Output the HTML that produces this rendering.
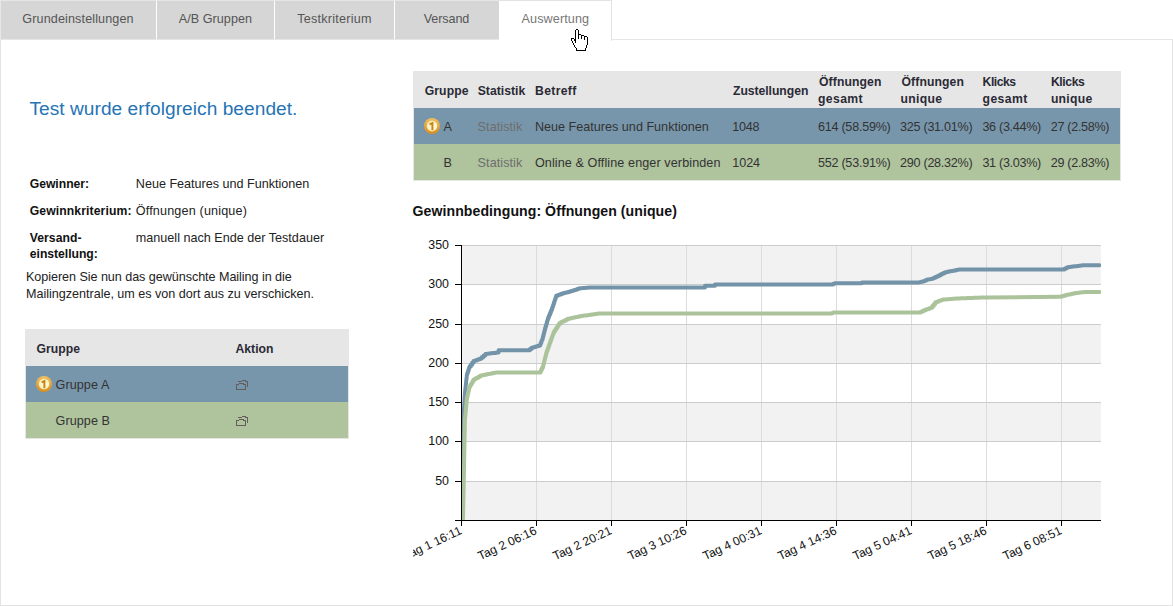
<!DOCTYPE html>
<html><head><meta charset="utf-8"><style>
html,body{margin:0;padding:0;background:#fff;width:1173px;height:606px;overflow:hidden;position:relative}
body{font-family:"Liberation Sans", sans-serif}
.t{position:absolute;white-space:nowrap;font-family:"Liberation Sans", sans-serif}
.tab{position:absolute;top:0;height:38px;background:#d6d6d6;border-top:1px solid #e6e6e6}
.atab{position:absolute;left:499px;top:0;width:112px;height:40px;background:#fff;border-top:1px solid #e3e3e3;border-right:1px solid #e3e3e3}
.box{position:absolute}
.chart{position:absolute;left:0;top:0}
.ic{position:absolute}
.panel{position:absolute;left:0;top:39px;width:1171px;height:566px;border:1px solid #e3e3e3;border-top:none}
.topline{position:absolute;left:0;top:39px;width:1173px;height:1px;background:#e6e6e6}
.leftline{position:absolute;left:0;top:0;width:1px;height:39px;background:#e6e6e6}
</style></head><body>
<div class="panel"></div>
<div class="topline"></div>
<div class="leftline"></div>
<div style="position:absolute;left:0;top:0;width:499px;height:1px;background:#e8e8e8"></div>
<div class="tab" style="left:1px;width:155px"></div>
<div class="tab" style="left:157px;width:117px"></div>
<div class="tab" style="left:275px;width:119px"></div>
<div class="tab" style="left:395px;width:104px"></div>
<div class="atab"></div>
<div class="box" style="left:25px;top:329px;width:322px;height:108px;border:1px solid #e6e6e6;background:#fff"></div>
<div class="box" style="left:26px;top:330px;width:322px;height:36px;background:#e6e6e6"></div>
<div class="box" style="left:26px;top:366px;width:322px;height:36px;background:#7896ab"></div>
<div class="box" style="left:26px;top:402px;width:322px;height:36px;background:#afc39d"></div>
<div class="box" style="left:413px;top:71px;width:706px;height:108px;border:1px solid #e6e6e6;background:#fff"></div>
<div class="box" style="left:414px;top:72px;width:706px;height:36px;background:#e6e6e6"></div>
<div class="box" style="left:414px;top:108px;width:706px;height:36px;background:#7896ab"></div>
<div class="box" style="left:414px;top:144px;width:706px;height:36px;background:#afc39d"></div>
<svg class="chart" width="1173" height="606" viewBox="0 0 1173 606" shape-rendering="crispEdges">
<defs><clipPath id="plot"><rect x="462" y="245" width="639" height="275"/></clipPath><clipPath id="lab"><rect x="413" y="0" width="760" height="606"/></clipPath></defs>
<rect x="462" y="245" width="639" height="39" fill="#f2f2f2"/>
<rect x="462" y="324" width="639" height="39" fill="#f2f2f2"/>
<rect x="462" y="402" width="639" height="39" fill="#f2f2f2"/>
<rect x="462" y="481" width="639" height="39" fill="#f2f2f2"/>
<rect x="536" y="245" width="1" height="275" fill="#dcdcdc"/>
<rect x="611" y="245" width="1" height="275" fill="#dcdcdc"/>
<rect x="686" y="245" width="1" height="275" fill="#dcdcdc"/>
<rect x="761" y="245" width="1" height="275" fill="#dcdcdc"/>
<rect x="836" y="245" width="1" height="275" fill="#dcdcdc"/>
<rect x="911" y="245" width="1" height="275" fill="#dcdcdc"/>
<rect x="986" y="245" width="1" height="275" fill="#dcdcdc"/>
<rect x="1061" y="245" width="1" height="275" fill="#dcdcdc"/>
<rect x="462" y="245" width="639" height="1" fill="#cccccc"/>
<rect x="455" y="245" width="6" height="1" fill="#000"/>
<rect x="462" y="284" width="639" height="1" fill="#cccccc"/>
<rect x="455" y="284" width="6" height="1" fill="#000"/>
<rect x="462" y="324" width="639" height="1" fill="#cccccc"/>
<rect x="455" y="324" width="6" height="1" fill="#000"/>
<rect x="462" y="363" width="639" height="1" fill="#cccccc"/>
<rect x="455" y="363" width="6" height="1" fill="#000"/>
<rect x="462" y="402" width="639" height="1" fill="#cccccc"/>
<rect x="455" y="402" width="6" height="1" fill="#000"/>
<rect x="462" y="441" width="639" height="1" fill="#cccccc"/>
<rect x="455" y="441" width="6" height="1" fill="#000"/>
<rect x="462" y="481" width="639" height="1" fill="#cccccc"/>
<rect x="455" y="481" width="6" height="1" fill="#000"/>
<rect x="455" y="520" width="6" height="1" fill="#000"/>
<polyline clip-path="url(#plot)" shape-rendering="geometricPrecision" points="462,519 462.02,519.0 462.02,517.39 462.04,517.39 462.04,515.78 462.06,515.78 462.06,514.16 462.07,514.16 462.07,512.55 462.09,512.55 462.09,510.94 462.11,510.94 462.11,509.33 462.13,509.33 462.13,507.71 462.15,507.71 462.15,506.1 462.17,506.1 462.17,504.49 462.18,504.49 462.18,502.88 462.2,502.88 462.2,501.27 462.22,501.27 462.22,499.65 462.24,499.65 462.24,498.04 462.26,498.04 462.26,496.43 462.28,496.43 462.28,494.82 462.29,494.82 462.29,493.2 462.31,493.2 462.31,491.59 462.33,491.59 462.33,489.98 462.35,489.98 462.35,488.37 462.37,488.37 462.37,486.76 462.39,486.76 462.39,485.14 462.4,485.14 462.4,483.53 462.42,483.53 462.42,481.92 462.44,481.92 462.44,480.31 462.46,480.31 462.46,478.69 462.48,478.69 462.48,477.08 462.5,477.08 462.5,475.47 462.51,475.47 462.51,473.86 462.53,473.86 462.53,472.24 462.55,472.24 462.55,470.63 462.57,470.63 462.57,469.02 462.59,469.02 462.59,467.41 462.61,467.41 462.61,465.8 462.62,465.8 462.62,464.18 462.64,464.18 462.64,462.57 462.66,462.57 462.66,460.96 462.68,460.96 462.68,459.35 462.7,459.35 462.7,457.73 462.72,457.73 462.72,456.12 462.73,456.12 462.73,454.51 462.75,454.51 462.75,452.9 462.77,452.9 462.77,451.29 462.79,451.29 462.79,449.67 462.81,449.67 462.81,448.06 462.83,448.06 462.83,446.45 462.84,446.45 462.84,444.84 462.86,444.84 462.86,443.22 462.88,443.22 462.88,441.61 462.9,441.61 462.9,440.0 462.95,440.0 462.95,438.38 462.99,438.38 462.99,436.77 463.04,436.77 463.04,435.15 463.08,435.15 463.08,433.54 463.13,433.54 463.13,431.92 463.18,431.92 463.18,430.31 463.22,430.31 463.22,428.69 463.27,428.69 463.27,427.08 463.32,427.08 463.32,425.46 463.36,425.46 463.36,423.85 463.41,423.85 463.41,422.23 463.45,422.23 463.45,420.62 463.5,420.62 463.5,419.0 463.59,419.0 463.59,417.36 463.68,417.36 463.68,415.73 463.76,415.73 463.76,414.09 463.85,414.09 463.85,412.45 463.94,412.45 463.94,410.81 464.02,410.81 464.02,409.18 464.11,409.18 464.11,407.54 464.2,407.54 464.2,405.9 464.29,405.9 464.29,404.26 464.38,404.26 464.38,402.62 464.46,402.62 464.46,400.99 464.55,400.99 464.55,399.35 464.64,399.35 464.64,397.71 464.72,397.71 464.72,396.07 464.81,396.07 464.81,394.44 464.9,394.44 464.9,392.8 465.07,392.8 465.07,391.26 465.23,391.26 465.23,389.72 465.4,389.72 465.4,388.18 465.57,388.18 465.57,386.63 465.73,386.63 465.73,385.09 465.9,385.09 465.9,383.55 466.07,383.55 466.07,382.01 466.23,382.01 466.23,380.47 466.4,380.47 466.4,378.93 466.57,378.93 466.57,377.38 466.73,377.38 466.73,375.84 466.9,375.84 466.9,374.3 467.42,374.3 467.42,372.72 467.94,372.72 467.94,371.14 468.46,371.14 468.46,369.56 468.98,369.56 468.98,367.98 469.5,367.98 469.5,366.4 470.83,366.4 470.83,364.63 472.17,364.63 472.17,362.87 473.5,362.87 473.5,361.1 475.15,361.1 475.15,360.45 476.8,360.45 476.8,359.8 478.45,359.8 478.45,359.15 480.1,359.15 480.1,358.5 481.87,358.5 481.87,356.97 483.63,356.97 483.63,355.43 485.4,355.43 485.4,353.9 487.1,353.9 487.1,353.7 488.8,353.7 488.8,353.5 490.5,353.5 490.5,353.3 492.2,353.3 492.2,353.1 493.9,353.1 493.9,352.9 495.6,352.9 495.6,352.7 497.3,352.7 497.3,352.5 498.6,352.5 498.6,350.2 528.2,350.3 529.85,350.3 529.85,349.0 531.5,349.0 531.5,347.7 533.14,347.7 533.14,347.2 534.78,347.2 534.78,346.7 536.42,346.7 536.42,346.2 538.06,346.2 538.06,345.7 539.7,345.7 539.7,345.2 540.33,345.2 540.33,343.75 540.95,343.75 540.95,342.3 541.58,342.3 541.58,340.85 542.2,340.85 542.2,339.4 542.62,339.4 542.62,337.75 543.03,337.75 543.03,336.1 543.45,336.1 543.45,334.45 543.87,334.45 543.87,332.8 544.28,332.8 544.28,331.15 544.7,331.15 544.7,329.5 545.17,329.5 545.17,327.86 545.64,327.86 545.64,326.21 546.11,326.21 546.11,324.57 546.59,324.57 546.59,322.93 547.06,322.93 547.06,321.29 547.53,321.29 547.53,319.64 548.0,319.64 548.0,318.0 548.68,318.0 548.68,316.33 549.37,316.33 549.37,314.67 550.05,314.67 550.05,313.0 550.73,313.0 550.73,311.33 551.42,311.33 551.42,309.67 552.1,309.67 552.1,308.0 552.61,308.0 552.61,306.46 553.12,306.46 553.12,304.93 553.64,304.93 553.64,303.39 554.15,303.39 554.15,301.85 554.66,301.85 554.66,300.31 555.18,300.31 555.18,298.77 555.69,298.77 555.69,297.24 556.2,297.24 556.2,295.7 557.85,295.7 557.85,295.07 559.5,295.07 559.5,294.45 561.15,294.45 561.15,293.82 562.8,293.82 562.8,293.2 564.45,293.2 564.45,292.8 566.1,292.8 566.1,292.4 567.75,292.4 567.75,292.0 569.4,292.0 569.4,291.6 571.05,291.6 571.05,291.05 572.7,291.05 572.7,290.5 574.35,290.5 574.35,289.95 576.0,289.95 576.0,289.4 577.65,289.4 577.65,288.85 579.3,288.85 579.3,288.3 580.83,288.3 580.83,288.19 582.36,288.19 582.36,288.07 583.89,288.07 583.89,287.96 585.41,287.96 585.41,287.84 586.94,287.84 586.94,287.73 588.47,287.73 588.47,287.61 590.0,287.61 590.0,287.5 703,287.5 705.0,287.5 705.0,285.8 713,285.8 715.0,285.8 715.0,284.4 831.8,284.4 833.2,284.4 833.2,283.8 834.6,283.8 834.6,283.2 860.5,283.2 861.9,283.2 861.9,282.4 919.1,282.4 921.5,281.8 922.95,281.8 922.95,281.23 924.4,281.23 924.4,280.65 925.85,280.65 925.85,280.07 927.3,280.07 927.3,279.5 928.93,279.5 928.93,279.2 930.57,279.2 930.57,278.9 932.2,278.9 932.2,278.6 933.81,278.6 933.81,277.8 935.43,277.8 935.43,277.0 937.04,277.0 937.04,276.2 938.65,276.2 938.65,275.4 940.26,275.4 940.26,274.6 941.88,274.6 941.88,273.8 943.49,273.8 943.49,273.0 945.1,273.0 945.1,272.2 946.64,272.2 946.64,271.9 948.19,271.9 948.19,271.6 949.73,271.6 949.73,271.3 951.28,271.3 951.28,271.0 952.82,271.0 952.82,270.7 954.37,270.7 954.37,270.4 955.91,270.4 955.91,270.1 957.46,270.1 957.46,269.8 959.0,269.8 959.0,269.5 1063,269.5 1064.43,269.5 1064.43,268.77 1065.87,268.77 1065.87,268.03 1067.3,268.03 1067.3,267.3 1068.97,267.3 1068.97,267.07 1070.63,267.07 1070.63,266.83 1072.3,266.83 1072.3,266.6 1073.97,266.6 1073.97,266.37 1075.63,266.37 1075.63,266.13 1077.3,266.13 1077.3,265.9 1078.97,265.9 1078.97,265.67 1080.63,265.67 1080.63,265.43 1082.3,265.43 1082.3,265.2 1099.4,265.2" fill="none" stroke="#7393a9" stroke-width="4" stroke-linejoin="round" stroke-linecap="round"/>
<polyline clip-path="url(#plot)" shape-rendering="geometricPrecision" points="463,519 463.03,519.0 463.03,517.39 463.06,517.39 463.06,515.78 463.09,515.78 463.09,514.18 463.12,514.18 463.12,512.57 463.15,512.57 463.15,510.96 463.18,510.96 463.18,509.35 463.21,509.35 463.21,507.74 463.25,507.74 463.25,506.14 463.28,506.14 463.28,504.53 463.31,504.53 463.31,502.92 463.34,502.92 463.34,501.31 463.37,501.31 463.37,499.7 463.4,499.7 463.4,498.1 463.43,498.1 463.43,496.49 463.46,496.49 463.46,494.88 463.49,494.88 463.49,493.27 463.52,493.27 463.52,491.66 463.55,491.66 463.55,490.05 463.58,490.05 463.58,488.45 463.61,488.45 463.61,486.84 463.64,486.84 463.64,485.23 463.67,485.23 463.67,483.62 463.7,483.62 463.7,482.01 463.74,482.01 463.74,480.41 463.77,480.41 463.77,478.8 463.8,478.8 463.8,477.19 463.83,477.19 463.83,475.58 463.86,475.58 463.86,473.97 463.89,473.97 463.89,472.37 463.92,472.37 463.92,470.76 463.95,470.76 463.95,469.15 463.98,469.15 463.98,467.54 464.01,467.54 464.01,465.93 464.04,465.93 464.04,464.33 464.07,464.33 464.07,462.72 464.1,462.72 464.1,461.11 464.13,461.11 464.13,459.5 464.16,459.5 464.16,457.89 464.2,457.89 464.2,456.29 464.23,456.29 464.23,454.68 464.26,454.68 464.26,453.07 464.29,453.07 464.29,451.46 464.32,451.46 464.32,449.85 464.35,449.85 464.35,448.25 464.38,448.25 464.38,446.64 464.41,446.64 464.41,445.03 464.44,445.03 464.44,443.42 464.47,443.42 464.47,441.81 464.5,441.81 464.5,440.2 464.53,440.2 464.53,438.6 464.56,438.6 464.56,436.99 464.59,436.99 464.59,435.38 464.62,435.38 464.62,433.77 464.65,433.77 464.65,432.16 464.69,432.16 464.69,430.56 464.72,430.56 464.72,428.95 464.75,428.95 464.75,427.34 464.78,427.34 464.78,425.73 464.81,425.73 464.81,424.12 464.84,424.12 464.84,422.52 464.87,422.52 464.87,420.91 464.9,420.91 464.9,419.3 465.05,419.3 465.05,417.67 465.21,417.67 465.21,416.04 465.36,416.04 465.36,414.41 465.52,414.41 465.52,412.78 465.67,412.78 465.67,411.15 465.82,411.15 465.82,409.52 465.98,409.52 465.98,407.88 466.13,407.88 466.13,406.25 466.28,406.25 466.28,404.62 466.44,404.62 466.44,402.99 466.59,402.99 466.59,401.36 466.75,401.36 466.75,399.73 466.9,399.73 466.9,398.1 467.27,398.1 467.27,396.4 467.64,396.4 467.64,394.7 468.01,394.7 468.01,393.0 468.39,393.0 468.39,391.3 468.76,391.3 468.76,389.6 469.13,389.6 469.13,387.9 469.5,387.9 469.5,386.2 470.5,386.2 470.5,384.55 471.5,384.55 471.5,382.9 472.5,382.9 472.5,381.25 473.5,381.25 473.5,379.6 475.15,379.6 475.15,378.62 476.8,378.62 476.8,377.65 478.45,377.65 478.45,376.68 480.1,376.68 480.1,375.7 481.63,375.7 481.63,375.37 483.17,375.37 483.17,375.03 484.7,375.03 484.7,374.7 486.23,374.7 486.23,374.37 487.77,374.37 487.77,374.03 489.3,374.03 489.3,373.7 490.98,373.7 490.98,373.38 492.65,373.38 492.65,373.05 494.32,373.05 494.32,372.72 496.0,372.72 496.0,372.4 539.7,372.6 540.53,372.6 540.53,370.9 541.35,370.9 541.35,369.2 542.17,369.2 542.17,367.5 543.0,367.5 543.0,365.8 543.41,365.8 543.41,364.15 543.83,364.15 543.83,362.5 544.24,362.5 544.24,360.85 544.65,360.85 544.65,359.2 545.06,359.2 545.06,357.55 545.47,357.55 545.47,355.9 545.89,355.9 545.89,354.25 546.3,354.25 546.3,352.6 546.89,352.6 546.89,350.94 547.47,350.94 547.47,349.29 548.06,349.29 548.06,347.63 548.64,347.63 548.64,345.97 549.23,345.97 549.23,344.31 549.81,344.31 549.81,342.66 550.4,342.66 550.4,341.0 550.95,341.0 550.95,339.5 551.5,339.5 551.5,338.0 552.05,338.0 552.05,336.5 552.6,336.5 552.6,335.0 553.15,335.0 553.15,333.5 553.7,333.5 553.7,332.0 554.67,332.0 554.67,330.48 555.63,330.48 555.63,328.97 556.6,328.97 556.6,327.45 557.57,327.45 557.57,325.93 558.53,325.93 558.53,324.42 559.5,324.42 559.5,322.9 561.16,322.9 561.16,322.08 562.82,322.08 562.82,321.26 564.48,321.26 564.48,320.44 566.14,320.44 566.14,319.62 567.8,319.62 567.8,318.8 569.44,318.8 569.44,318.44 571.09,318.44 571.09,318.09 572.73,318.09 572.73,317.73 574.37,317.73 574.37,317.37 576.01,317.37 576.01,317.01 577.66,317.01 577.66,316.66 579.3,316.66 579.3,316.3 580.83,316.3 580.83,316.07 582.36,316.07 582.36,315.84 583.89,315.84 583.89,315.61 585.41,315.61 585.41,315.39 586.94,315.39 586.94,315.16 588.47,315.16 588.47,314.93 590.0,314.93 590.0,314.7 591.67,314.7 591.67,314.48 593.33,314.48 593.33,314.27 595.0,314.27 595.0,314.05 596.67,314.05 596.67,313.83 598.33,313.83 598.33,313.62 600.0,313.62 600.0,313.4 830.5,313.4 831.85,313.4 831.85,312.9 833.2,312.9 833.2,312.4 919.1,312.4 920.74,312.4 920.74,311.7 922.38,311.7 922.38,311.0 924.02,311.0 924.02,310.3 925.66,310.3 925.66,309.6 927.3,309.6 927.3,308.9 929.2,308.9 929.2,308.25 931.1,308.25 931.1,307.6 932.53,307.6 932.53,305.8 933.97,305.8 933.97,304.0 935.4,304.0 935.4,302.2 936.9,302.2 936.9,301.66 938.4,301.66 938.4,301.12 939.9,301.12 939.9,300.58 941.4,300.58 941.4,300.04 942.9,300.04 942.9,299.5 944.46,299.5 944.46,299.39 946.01,299.39 946.01,299.28 947.57,299.28 947.57,299.17 949.12,299.17 949.12,299.06 950.68,299.06 950.68,298.94 952.23,298.94 952.23,298.83 953.79,298.83 953.79,298.72 955.34,298.72 955.34,298.61 956.9,298.61 956.9,298.5 958.54,298.5 958.54,298.44 960.18,298.44 960.18,298.37 961.82,298.37 961.82,298.31 963.46,298.31 963.46,298.24 965.11,298.24 965.11,298.18 966.75,298.18 966.75,298.11 968.39,298.11 968.39,298.05 970.03,298.05 970.03,297.98 971.67,297.98 971.67,297.92 973.31,297.92 973.31,297.85 974.95,297.85 974.95,297.79 976.59,297.79 976.59,297.72 978.24,297.72 978.24,297.66 979.88,297.66 979.88,297.59 981.52,297.59 981.52,297.53 983.16,297.53 983.16,297.46 984.8,297.46 984.8,297.4 1059.7,296.8 1061.5,296.8 1061.5,296.27 1063.3,296.27 1063.3,295.73 1065.1,295.73 1065.1,295.2 1066.72,295.2 1066.72,294.85 1068.33,294.85 1068.33,294.5 1069.95,294.5 1069.95,294.15 1071.57,294.15 1071.57,293.8 1073.18,293.8 1073.18,293.45 1074.8,293.45 1074.8,293.1 1076.4,293.1 1076.4,292.92 1078.0,292.92 1078.0,292.73 1079.6,292.73 1079.6,292.55 1081.2,292.55 1081.2,292.37 1082.8,292.37 1082.8,292.18 1084.4,292.18 1084.4,292.0 1099.4,292" fill="none" stroke="#abc39b" stroke-width="4" stroke-linejoin="round" stroke-linecap="round"/>
<rect x="461" y="245" width="1" height="276" fill="#000"/>
<rect x="461" y="520" width="640" height="1" fill="#000"/>
<rect x="461" y="520" width="1" height="6" fill="#000"/>
<rect x="536" y="520" width="1" height="6" fill="#000"/>
<rect x="611" y="520" width="1" height="6" fill="#000"/>
<rect x="686" y="520" width="1" height="6" fill="#000"/>
<rect x="761" y="520" width="1" height="6" fill="#000"/>
<rect x="836" y="520" width="1" height="6" fill="#000"/>
<rect x="911" y="520" width="1" height="6" fill="#000"/>
<rect x="986" y="520" width="1" height="6" fill="#000"/>
<rect x="1061" y="520" width="1" height="6" fill="#000"/>
<text shape-rendering="geometricPrecision" x="449" y="248.50" text-anchor="end" font-family="Liberation Sans" font-size="12.4" fill="#111">350</text>
<text shape-rendering="geometricPrecision" x="449" y="287.50" text-anchor="end" font-family="Liberation Sans" font-size="12.4" fill="#111">300</text>
<text shape-rendering="geometricPrecision" x="449" y="327.50" text-anchor="end" font-family="Liberation Sans" font-size="12.4" fill="#111">250</text>
<text shape-rendering="geometricPrecision" x="449" y="366.50" text-anchor="end" font-family="Liberation Sans" font-size="12.4" fill="#111">200</text>
<text shape-rendering="geometricPrecision" x="449" y="405.50" text-anchor="end" font-family="Liberation Sans" font-size="12.4" fill="#111">150</text>
<text shape-rendering="geometricPrecision" x="449" y="444.50" text-anchor="end" font-family="Liberation Sans" font-size="12.4" fill="#111">100</text>
<text shape-rendering="geometricPrecision" x="449" y="484.50" text-anchor="end" font-family="Liberation Sans" font-size="12.4" fill="#111">50</text>
<g clip-path="url(#lab)">
<text transform="translate(462.5,533.5) rotate(-25)" text-anchor="end" font-family="Liberation Sans" font-size="12.1" fill="#111">Tag 1 16:11</text>
<text transform="translate(537.5,533.5) rotate(-25)" text-anchor="end" font-family="Liberation Sans" font-size="12.1" fill="#111">Tag 2 06:16</text>
<text transform="translate(612.5,533.5) rotate(-25)" text-anchor="end" font-family="Liberation Sans" font-size="12.1" fill="#111">Tag 2 20:21</text>
<text transform="translate(687.5,533.5) rotate(-25)" text-anchor="end" font-family="Liberation Sans" font-size="12.1" fill="#111">Tag 3 10:26</text>
<text transform="translate(762.5,533.5) rotate(-25)" text-anchor="end" font-family="Liberation Sans" font-size="12.1" fill="#111">Tag 4 00:31</text>
<text transform="translate(837.5,533.5) rotate(-25)" text-anchor="end" font-family="Liberation Sans" font-size="12.1" fill="#111">Tag 4 14:36</text>
<text transform="translate(912.5,533.5) rotate(-25)" text-anchor="end" font-family="Liberation Sans" font-size="12.1" fill="#111">Tag 5 04:41</text>
<text transform="translate(987.5,533.5) rotate(-25)" text-anchor="end" font-family="Liberation Sans" font-size="12.1" fill="#111">Tag 5 18:46</text>
<text transform="translate(1062.5,533.5) rotate(-25)" text-anchor="end" font-family="Liberation Sans" font-size="12.1" fill="#111">Tag 6 08:51</text>
</g>
</svg>
<div class="t" style="left:22.30px;top:11px;font-size:12.6px;line-height:16px;color:#555;font-weight:normal;letter-spacing:0.124px">Grundeinstellungen</div>
<div class="t" style="left:178.80px;top:11px;font-size:12.6px;line-height:16px;color:#555;font-weight:normal;letter-spacing:0.040px">A/B Gruppen</div>
<div class="t" style="left:297.30px;top:11px;font-size:12.6px;line-height:16px;color:#555;font-weight:normal;letter-spacing:0.225px">Testkriterium</div>
<div class="t" style="left:423.70px;top:11px;font-size:12.6px;line-height:16px;color:#555;font-weight:normal;letter-spacing:-0.100px">Versand</div>
<div class="t" style="left:521.60px;top:11px;font-size:12.6px;line-height:16px;color:#777;font-weight:normal;letter-spacing:0.100px">Auswertung</div>
<div class="t" style="left:29.40px;top:97px;font-size:19.1px;line-height:24px;color:#2574b5;font-weight:normal;letter-spacing:0.053px">Test wurde erfolgreich beendet.</div>
<div class="t" style="left:29.70px;top:177px;font-size:12.2px;line-height:15px;color:#111;font-weight:bold;letter-spacing:-0.025px">Gewinner:</div>
<div class="t" style="left:135.80px;top:176px;font-size:12.6px;line-height:16px;color:#222;font-weight:normal;letter-spacing:-0.004px">Neue Features und Funktionen</div>
<div class="t" style="left:29.70px;top:204px;font-size:12.2px;line-height:15px;color:#111;font-weight:bold;letter-spacing:0.107px">Gewinnkriterium:</div>
<div class="t" style="left:135.80px;top:203px;font-size:12.6px;line-height:16px;color:#222;font-weight:normal;letter-spacing:0.165px">Öffnungen (unique)</div>
<div class="t" style="left:29.80px;top:231px;font-size:12.2px;line-height:15px;color:#111;font-weight:bold;letter-spacing:0.029px">Versand-</div>
<div class="t" style="left:29.80px;top:247px;font-size:12.2px;line-height:15px;color:#111;font-weight:bold;letter-spacing:-0.036px">einstellung:</div>
<div class="t" style="left:135.80px;top:230px;font-size:12.6px;line-height:16px;color:#222;font-weight:normal;letter-spacing:0.007px">manuell nach Ende der Testdauer</div>
<div class="t" style="left:26.00px;top:269px;font-size:12.6px;line-height:16px;color:#222;font-weight:normal;letter-spacing:-0.053px">Kopieren Sie nun das gewünschte Mailing in die</div>
<div class="t" style="left:26.00px;top:286px;font-size:12.6px;line-height:16px;color:#222;font-weight:normal;letter-spacing:-0.020px">Mailingzentrale, um es von dort aus zu verschicken.</div>
<div class="t" style="left:36.50px;top:342px;font-size:12.2px;line-height:15px;color:#2a2a35;font-weight:bold;letter-spacing:0.060px">Gruppe</div>
<div class="t" style="left:235.50px;top:342px;font-size:12.2px;line-height:15px;color:#2a2a35;font-weight:bold;letter-spacing:0.020px">Aktion</div>
<div class="t" style="left:55.50px;top:377px;font-size:12.6px;line-height:16px;color:#333;font-weight:normal;letter-spacing:0.086px">Gruppe A</div>
<div class="t" style="left:55.50px;top:413px;font-size:12.6px;line-height:16px;color:#333;font-weight:normal;letter-spacing:0.086px">Gruppe B</div>
<div class="t" style="left:424.70px;top:84px;font-size:12.2px;line-height:15px;color:#2a2a35;font-weight:bold;letter-spacing:0.100px">Gruppe</div>
<div class="t" style="left:477.70px;top:84px;font-size:12.2px;line-height:15px;color:#2a2a35;font-weight:bold;letter-spacing:0.025px">Statistik</div>
<div class="t" style="left:535.10px;top:84px;font-size:12.2px;line-height:15px;color:#2a2a35;font-weight:bold;letter-spacing:0.317px">Betreff</div>
<div class="t" style="left:733.00px;top:84px;font-size:12.2px;line-height:15px;color:#2a2a35;font-weight:bold;letter-spacing:-0.045px">Zustellungen</div>
<div class="t" style="left:819.00px;top:75px;font-size:12.2px;line-height:15px;color:#2a2a35;font-weight:bold;letter-spacing:0.100px">Öffnungen</div>
<div class="t" style="left:818.00px;top:92px;font-size:12.2px;line-height:15px;color:#2a2a35;font-weight:bold;letter-spacing:0.380px">gesamt</div>
<div class="t" style="left:901.50px;top:75px;font-size:12.2px;line-height:15px;color:#2a2a35;font-weight:bold;letter-spacing:0.100px">Öffnungen</div>
<div class="t" style="left:900.50px;top:92px;font-size:12.2px;line-height:15px;color:#2a2a35;font-weight:bold;letter-spacing:0.340px">unique</div>
<div class="t" style="left:982.60px;top:75px;font-size:12.2px;line-height:15px;color:#2a2a35;font-weight:bold;letter-spacing:-0.500px">Klicks</div>
<div class="t" style="left:982.60px;top:92px;font-size:12.2px;line-height:15px;color:#2a2a35;font-weight:bold;letter-spacing:0.400px">gesamt</div>
<div class="t" style="left:1050.90px;top:75px;font-size:12.2px;line-height:15px;color:#2a2a35;font-weight:bold;letter-spacing:-0.400px">Klicks</div>
<div class="t" style="left:1050.90px;top:92px;font-size:12.2px;line-height:15px;color:#2a2a35;font-weight:bold;letter-spacing:0.280px">unique</div>
<div class="t" style="left:443.60px;top:119px;font-size:12.6px;line-height:16px;color:#333;font-weight:normal;letter-spacing:0.000px">A</div>
<div class="t" style="left:477.60px;top:119px;font-size:12.6px;line-height:16px;color:#6e6e6e;font-weight:normal;letter-spacing:0.075px">Statistik</div>
<div class="t" style="left:534.90px;top:119px;font-size:12.6px;line-height:16px;color:#333;font-weight:normal;letter-spacing:0.011px">Neue Features und Funktionen</div>
<div class="t" style="left:732.30px;top:119px;font-size:12.6px;line-height:16px;color:#333;font-weight:normal;letter-spacing:-0.233px">1048</div>
<div class="t" style="left:817.90px;top:119px;font-size:12.6px;line-height:16px;color:#333;font-weight:normal;letter-spacing:-0.245px">614 (58.59%)</div>
<div class="t" style="left:900.10px;top:119px;font-size:12.6px;line-height:16px;color:#333;font-weight:normal;letter-spacing:-0.282px">325 (31.01%)</div>
<div class="t" style="left:982.40px;top:119px;font-size:12.6px;line-height:16px;color:#333;font-weight:normal;letter-spacing:-0.300px">36 (3.44%)</div>
<div class="t" style="left:1050.80px;top:119px;font-size:12.6px;line-height:16px;color:#333;font-weight:normal;letter-spacing:-0.322px">27 (2.58%)</div>
<div class="t" style="left:443.50px;top:155px;font-size:12.6px;line-height:16px;color:#333;font-weight:normal;letter-spacing:0.000px">B</div>
<div class="t" style="left:477.60px;top:155px;font-size:12.6px;line-height:16px;color:#6e6e6e;font-weight:normal;letter-spacing:0.075px">Statistik</div>
<div class="t" style="left:534.90px;top:155px;font-size:12.6px;line-height:16px;color:#333;font-weight:normal;letter-spacing:0.100px">Online &amp; Offline enger verbinden</div>
<div class="t" style="left:732.30px;top:155px;font-size:12.6px;line-height:16px;color:#333;font-weight:normal;letter-spacing:-0.067px">1024</div>
<div class="t" style="left:817.90px;top:155px;font-size:12.6px;line-height:16px;color:#333;font-weight:normal;letter-spacing:-0.245px">552 (53.91%)</div>
<div class="t" style="left:900.10px;top:155px;font-size:12.6px;line-height:16px;color:#333;font-weight:normal;letter-spacing:-0.282px">290 (28.32%)</div>
<div class="t" style="left:982.40px;top:155px;font-size:12.6px;line-height:16px;color:#333;font-weight:normal;letter-spacing:-0.300px">31 (3.03%)</div>
<div class="t" style="left:1050.80px;top:155px;font-size:12.6px;line-height:16px;color:#333;font-weight:normal;letter-spacing:-0.322px">29 (2.83%)</div>
<div class="t" style="left:412.60px;top:202px;font-size:14.1px;line-height:18px;color:#111;font-weight:bold;letter-spacing:0.059px">Gewinnbedingung: Öffnungen (unique)</div>
<svg class="ic" style="left:424px;top:117.8px" width="16" height="16" viewBox="0 0 16 16"><defs><linearGradient id="oa" x1="0" y1="0" x2="0" y2="1"><stop offset="0" stop-color="#f0bf62"/><stop offset="1" stop-color="#d88d1e"/></linearGradient><radialGradient id="ia" cx="0.55" cy="0.5" r="0.6"><stop offset="0" stop-color="#fffff4"/><stop offset="0.65" stop-color="#f8f2c4"/><stop offset="1" stop-color="#ece096"/></radialGradient></defs><circle cx="8" cy="8" r="8" fill="url(#oa)"/><circle cx="8" cy="8" r="5.4" fill="url(#ia)"/><path d="M5.6 6.4 L8.4 5 V12.2" fill="none" stroke="#c8860f" stroke-width="2" stroke-linejoin="miter"/></svg>
<svg class="ic" style="left:36px;top:376px" width="16" height="16" viewBox="0 0 16 16"><defs><linearGradient id="ob" x1="0" y1="0" x2="0" y2="1"><stop offset="0" stop-color="#f0bf62"/><stop offset="1" stop-color="#d88d1e"/></linearGradient><radialGradient id="ib" cx="0.55" cy="0.5" r="0.6"><stop offset="0" stop-color="#fffff4"/><stop offset="0.65" stop-color="#f8f2c4"/><stop offset="1" stop-color="#ece096"/></radialGradient></defs><circle cx="8" cy="8" r="8" fill="url(#ob)"/><circle cx="8" cy="8" r="5.4" fill="url(#ib)"/><path d="M5.6 6.4 L8.4 5 V12.2" fill="none" stroke="#c8860f" stroke-width="2" stroke-linejoin="miter"/></svg>
<svg class="ic" style="left:236px;top:380px" width="12" height="10" viewBox="0 0 12 10" shape-rendering="crispEdges" fill="#615e5c"><rect x="0" y="4" width="1" height="6"/><rect x="9" y="4" width="1" height="6"/><rect x="0" y="9" width="10" height="1"/><rect x="0" y="4" width="3" height="1"/><rect x="3" y="3" width="1" height="1"/><rect x="3" y="3" width="5" height="1"/><rect x="7" y="4" width="3" height="1"/><rect x="2" y="1" width="4" height="1"/><rect x="6" y="0" width="4" height="1"/><rect x="9" y="1" width="3" height="1"/><rect x="11" y="1" width="1" height="6"/></svg>
<svg class="ic" style="left:236px;top:416px" width="12" height="10" viewBox="0 0 12 10" shape-rendering="crispEdges" fill="#615e5c"><rect x="0" y="4" width="1" height="6"/><rect x="9" y="4" width="1" height="6"/><rect x="0" y="9" width="10" height="1"/><rect x="0" y="4" width="3" height="1"/><rect x="3" y="3" width="1" height="1"/><rect x="3" y="3" width="5" height="1"/><rect x="7" y="4" width="3" height="1"/><rect x="2" y="1" width="4" height="1"/><rect x="6" y="0" width="4" height="1"/><rect x="9" y="1" width="3" height="1"/><rect x="11" y="1" width="1" height="6"/></svg>
<svg class="ic" style="left:0;top:0" width="1173" height="606" shape-rendering="crispEdges"><polygon points="576,30 578,30 578,35 581,35 581,36 584,36 584,37 587,38 587,45 585,48 585,50 576,50 576,48 572,41 572,39 574,40 575,43" fill="#fff"/><rect x="576" y="29" width="2" height="1" fill="#000"/><rect x="575" y="30" width="1" height="13" fill="#000"/><rect x="578" y="30" width="1" height="9" fill="#000"/><rect x="579" y="34" width="2" height="1" fill="#000"/><rect x="581" y="35" width="1" height="4" fill="#000"/><rect x="582" y="35" width="2" height="1" fill="#000"/><rect x="584" y="36" width="1" height="4" fill="#000"/><rect x="585" y="36" width="2" height="1" fill="#000"/><rect x="587" y="37" width="1" height="8" fill="#000"/><rect x="586" y="45" width="1" height="3" fill="#000"/><rect x="585" y="48" width="1" height="3" fill="#000"/><rect x="576" y="50" width="10" height="1" fill="#000"/><rect x="576" y="48" width="1" height="3" fill="#000"/><rect x="575" y="47" width="1" height="1" fill="#000"/><rect x="574" y="45" width="1" height="2" fill="#000"/><rect x="573" y="43" width="1" height="2" fill="#000"/><rect x="572" y="41" width="1" height="2" fill="#000"/><rect x="571" y="38" width="1" height="3" fill="#000"/><rect x="571" y="38" width="3" height="1" fill="#000"/><rect x="574" y="39" width="1" height="2" fill="#000"/></svg>

</body></html>
